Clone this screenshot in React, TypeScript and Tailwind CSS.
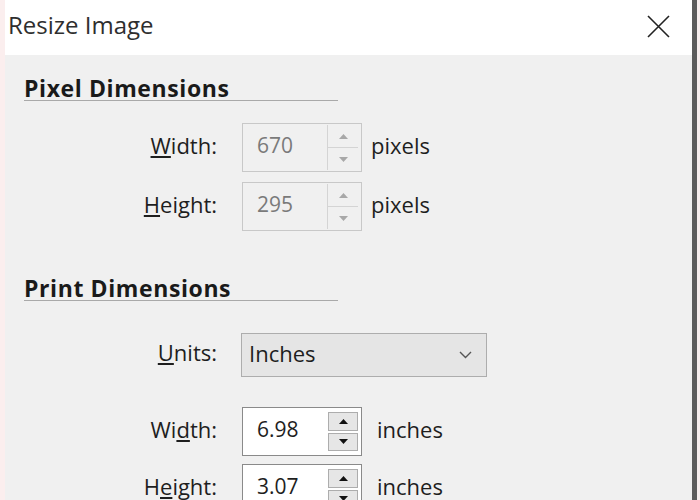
import React from 'react';

const font = { fontFamily: '"Open Sans", "Noto Sans", Arial, sans-serif' };

const Arrow: React.FC<{ up?: boolean; color: string }> = ({ up, color }) => (
  <svg width="9" height="5" viewBox="0 0 9 5">
    <path d={up ? 'M0 5 L4.5 0 L9 5 Z' : 'M0 0 L4.5 5 L9 0 Z'} fill={color} />
  </svg>
);

const SpinBox: React.FC<{ value: string; disabled?: boolean }> = ({ value, disabled }) => {
  if (disabled) {
    return (
      <div className="flex h-[49px] w-[120px] border border-[#c8c8c8] bg-[#f0f0f0]">
        <div className="flex flex-1 items-center pb-[4px] pl-[14px] text-[21px] text-[#7a7a7a]">{value}</div>
        <div className="my-[1px] mr-[3px] flex w-[31px] flex-col border-l border-[#d4d4d4]">
          <div className="flex flex-1 items-center justify-center border-b border-[#d4d4d4]">
            <Arrow up color="#a8a8a8" />
          </div>
          <div className="flex flex-1 items-center justify-center">
            <Arrow color="#a8a8a8" />
          </div>
        </div>
      </div>
    );
  }
  return (
    <div className="flex h-[49px] w-[120px] border border-[#8a8a8a] bg-white">
      <div className="flex flex-1 items-center pb-[4px] pl-[14px] text-[21px] text-[#1e1e1e]">{value}</div>
      <div className="my-[4px] mr-[3px] flex w-[30px] flex-col gap-[2px]">
        <div className="flex flex-1 items-center justify-center border border-[#adadad] bg-[#e6e6e6]">
          <Arrow up color="#111" />
        </div>
        <div className="flex flex-1 items-center justify-center border border-[#adadad] bg-[#e6e6e6]">
          <Arrow color="#111" />
        </div>
      </div>
    </div>
  );
};

const SectionTitle: React.FC<{ title: string; className?: string }> = ({ title, className }) => (
  <div className={`w-[314px] border-b border-[#a9a9a9] text-[23px] font-bold leading-[24px] tracking-[0.6px] text-[#1a1a1a] ${className}`}>
    {title}
  </div>
);

const Row: React.FC<{ label: React.ReactNode; children: React.ReactNode; className?: string }> = ({ label, children, className }) => (
  <div className={`flex items-center ${className}`}>
    <div className="w-[193px] pb-[5px] text-right text-[22px] text-[#1e1e1e]">{label}</div>
    <div className="ml-[25px] flex items-center">{children}</div>
  </div>
);

export default function App() {
  return (
    <div className="flex h-[500px] w-[700px] overflow-hidden bg-white" style={font}>
      <div className="flex flex-1 flex-col border-l-[5px] border-[#fbeeee]">
        <div className="flex h-[55px] shrink-0 items-start justify-between bg-white">
          <div className="pl-[3px] pt-[10px] text-[24px] leading-[30px] text-[#2e2e2e]">Resize Image</div>
          <svg className="mr-[22px] mt-[15px]" width="23" height="23" viewBox="0 0 23 23">
            <path d="M1 1 L22 22 M22 1 L1 22" stroke="#222" strokeWidth="1.6" />
          </svg>
        </div>
        <div className="flex-1 bg-[#f0f0f0] pl-[19px] pt-[21px]">
          <SectionTitle title="Pixel Dimensions" />
          <Row className="mt-[22px]" label={<><u className="underline-offset-2">W</u>idth:</>}>
            <SpinBox value="670" disabled />
            <span className="ml-[9px] pb-[5px] text-[22px] text-[#1e1e1e]">pixels</span>
          </Row>
          <Row className="mt-[10px]" label={<><u className="underline-offset-2">H</u>eight:</>}>
            <SpinBox value="295" disabled />
            <span className="ml-[9px] pb-[5px] text-[22px] text-[#1e1e1e]">pixels</span>
          </Row>
          <SectionTitle title="Print Dimensions" className="mt-[45px]" />
          <Row className="mt-[32px]" label={<><u className="underline-offset-2">U</u>nits:</>}>
            <div className="-ml-[1px] flex h-[44px] w-[246px] items-center justify-between border border-[#adadad] bg-[#e5e5e5] pb-[3px] pl-[7px] pr-[14px] text-[22px] text-[#1e1e1e]">
              <span>Inches</span>
              <svg className="mt-[3px]" width="13" height="8" viewBox="0 0 13 8">
                <path d="M1 1 L6.5 6.5 L12 1" stroke="#555" strokeWidth="1.4" fill="none" />
              </svg>
            </div>
          </Row>
          <Row className="mt-[30px]" label={<>Wi<u className="underline-offset-2">d</u>th:</>}>
            <SpinBox value="6.98" />
            <span className="ml-[15px] pb-[5px] text-[22px] text-[#1e1e1e]">inches</span>
          </Row>
          <Row className="mt-[8px]" label={<>H<u className="underline-offset-2">e</u>ight:</>}>
            <SpinBox value="3.07" />
            <span className="ml-[15px] pb-[5px] text-[22px] text-[#1e1e1e]">inches</span>
          </Row>
        </div>
      </div>
      <div className="w-[5px] bg-[#5c5c5c]" />
      <div className="w-[3px] bg-[#f7eeee]" />
    </div>
  );
}
